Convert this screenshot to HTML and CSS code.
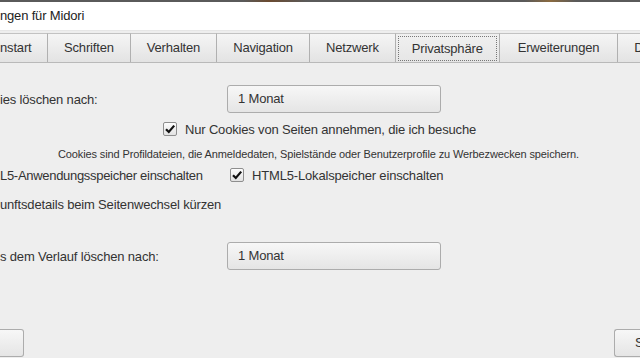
FILE: index.html
```html
<!DOCTYPE html>
<html lang="de">
<head>
<meta charset="utf-8">
<link rel="stylesheet" href="styles.css">
</head>
<body>
<div class="strip"></div>
<div class="titlebar">ngen für Midori</div>
<div class="tabs">
  <div class="tab first">nstart</div>
  <div class="tab">Schriften</div>
  <div class="tab">Verhalten</div>
  <div class="tab">Navigation</div>
  <div class="tab">Netzwerk</div>
  <div class="tab active"><span class="focus">Privatsphäre</span></div>
  <div class="tab wide">Erweiterungen</div>
  <div class="tab last">D</div>
</div>
<div class="content">
  <div class="row r1">
    <div class="label">ies löschen nach:</div>
    <div class="combo">1 Monat</div>
  </div>
  <div class="row r2">
    <span class="check"><svg width="14" height="14" viewBox="0 0 14 14"><path d="M3 7.2 L5.8 10 L11.2 3.6" fill="none" stroke="#111" stroke-width="2.2"/></svg></span>
    <span class="ctext">Nur Cookies von Seiten annehmen, die ich besuche</span>
  </div>
  <div class="row r3 small">Cookies sind Profildateien, die Anmeldedaten, Spielstände oder Benutzerprofile zu Werbezwecken speichern.</div>
  <div class="row r4">
    <span class="l4">L5-Anwendungsspeicher einschalten</span>
    <span class="check"><svg width="14" height="14" viewBox="0 0 14 14"><path d="M3 7.2 L5.8 10 L11.2 3.6" fill="none" stroke="#111" stroke-width="2.2"/></svg></span>
    <span class="ctext">HTML5-Lokalspeicher einschalten</span>
  </div>
  <div class="row r5">unftsdetails beim Seitenwechsel kürzen</div>
  <div class="row r6">
    <div class="label">s dem Verlauf löschen nach:</div>
    <div class="combo">1 Monat</div>
  </div>
  <div class="row buttons">
    <div class="btn left"></div>
    <div class="btn right">S</div>
  </div>
</div>
</body>
</html>
```
FILE: styles.css
```css
html, body {
  margin: 0;
  padding: 0;
}
body {
  width: 640px;
  height: 358px;
  overflow: hidden;
  background: #eeeeee;
  font-family: "Liberation Sans", Arial, sans-serif;
  font-size: 13px;
  letter-spacing: -0.17px;
  color: #333;
}
.strip {
  height: 2px;
  background: linear-gradient(90deg, #5a5a5a 0%, #5a5a5a 38%, #6a4a30 42%, #5a5a5a 48%, #5a5a5a 82%, #8a6a40 86%, #5a5a5a 90%);
}
.titlebar {
  height: 29px;
  line-height: 28px;
  background: #fff;
  color: #222;
  font-size: 13px;
  border-bottom: 1px solid #e6e6e6;
  box-sizing: border-box;
}
.tabs {
  display: flex;
  margin-top: 2px;
  height: 30px;
  box-sizing: border-box;
  border-bottom: 1px solid #b9b9b9;
}
.tab {
  height: 29px;
  box-sizing: border-box;
  padding: 0 16px;
  line-height: 28px;
  color: #333;
  background: linear-gradient(#f5f5f5, #e3e3e3);
  border-top: 1px solid #c2c2c2;
  border-right: 1px solid #b0b0b0;
  white-space: nowrap;
}
.tab.first {
  padding-left: 0;
  width: 48px;
}
.tab.wide {
  padding: 0 18px;
}
.tab.last {
  border-right: none;
  flex: 1;
}
.tab.active {
  background: linear-gradient(#f0f0f0, #e6e6e6);
  padding: 2px 2px;
}
.focus {
  display: block;
  height: 25px;
  line-height: 23px;
  box-sizing: border-box;
  padding: 0 13px;
  border: 1px dotted #777;
}
.content {
  display: flex;
  flex-direction: column;
}
.row {
  display: flex;
  align-items: center;
  white-space: nowrap;
}
.label {
  width: 227px;
}
.combo {
  width: 214px;
  height: 28px;
  box-sizing: border-box;
  border: 1px solid #acacac;
  border-radius: 3px;
  background: linear-gradient(#f7f7f7, #e5e5e5);
  padding-left: 10px;
  line-height: 26px;
  color: #333;
}
.r1 { margin-top: 22px; }
.r2 { margin-top: 8px; height: 16px; padding-left: 163px; }
.check {
  width: 14px;
  height: 14px;
  box-sizing: border-box;
  border: 1px solid #8e8e8e;
  border-radius: 2px;
  background: linear-gradient(#fdfdfd, #e2e2e2);
  display: flex;
  align-items: center;
  justify-content: center;
}
.check svg { display: block; margin: -1px; }
.ctext { margin-left: 8px; }
.r3 {
  margin-top: 10px;
  height: 14px;
  padding-left: 58px;
  font-size: 11px;
  letter-spacing: -0.12px;
}
.r4 { margin-top: 6px; height: 16px; }
.l4 { width: 230px; letter-spacing: -0.3px; }
.r5 { margin-top: 13px; height: 16px; }
.r6 { margin-top: 30px; }
.buttons {
  margin-top: 59px;
  justify-content: space-between;
}
.btn {
  height: 28px;
  box-sizing: border-box;
  border: 1px solid #acacac;
  border-radius: 3px;
  background: linear-gradient(#f7f7f7, #e5e5e5);
  line-height: 26px;
}
.btn.left {
  width: 24px;
  border-left: none;
  border-radius: 0 3px 3px 0;
}
.btn.right {
  width: 26px;
  border-right: none;
  border-radius: 3px 0 0 3px;
  padding-left: 20px;
}
```
